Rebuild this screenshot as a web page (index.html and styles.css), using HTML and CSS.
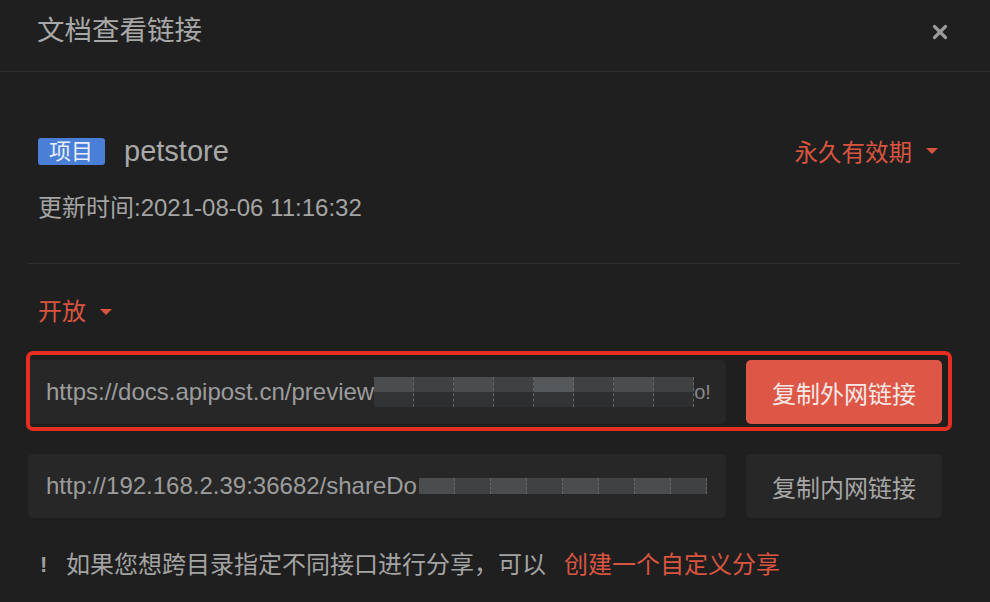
FILE: index.html
```html
<!DOCTYPE html>
<html lang="zh">
<head>
<meta charset="utf-8">
<link rel="stylesheet" href="styles.css">
</head>
<body>
<div class="dialog">
  <div class="header">
    <div class="title">文档查看链接</div>
    <div class="close">
      <svg width="16" height="16" viewBox="0 0 16 16"><path d="M2.5 2.5 L13.5 13.5 M13.5 2.5 L2.5 13.5" stroke="#9a9a9a" stroke-width="3.2" stroke-linecap="round"/></svg>
    </div>
  </div>
  <div class="body">
    <div class="info">
      <div class="project-row">
        <div class="project">
          <span class="tag">项目</span>
          <span class="name">petstore</span>
        </div>
        <div class="expire">永久有效期 <span class="caret"></span></div>
      </div>
      <div class="updated">更新时间:2021-08-06 11:16:32</div>
    </div>
    <div class="divider"></div>
    <div class="mode">开放 <span class="caret"></span></div>
    <div class="links">
      <div class="link-row">
        <div class="input">
          <span class="url">https://docs.apipost.cn/preview</span>
          <span class="blur b1"><i></i><i></i><i></i><i></i><i></i><i></i><i></i><i></i></span>
          <span class="tail">o!</span>
        </div>
        <button class="btn primary">复制外网链接</button>
      </div>
      <div class="link-row">
        <div class="input">
          <span class="url">http://192.168.2.39:36682/shareDo</span>
          <span class="blur b2"><i></i><i></i><i></i><i></i><i></i><i></i><i></i><i></i></span>
        </div>
        <button class="btn">复制内网链接</button>
      </div>
      <div class="highlight"></div>
    </div>
    <div class="note">
      <span class="bang">!</span>
      <span>如果您想跨目录指定不同接口进行分享，可以</span>
      <span class="create">创建一个自定义分享</span>
    </div>
  </div>
</div>
</body>
</html>
```

FILE: styles.css
```css
html, body {
  margin: 0;
  padding: 0;
  background: #1f1f1f;
}
body {
  width: 990px;
  height: 602px;
  overflow: hidden;
  font-family: "Liberation Sans", "Noto Sans CJK SC", sans-serif;
  color: #a9a9a9;
}
.dialog {
  display: flex;
  flex-direction: column;
}
.header {
  height: 72px;
  box-sizing: border-box;
  border-bottom: 1px solid #2f2f2f;
  display: flex;
  align-items: flex-start;
  justify-content: space-between;
  padding: 12px 42px 0 37px;
}
.title {
  font-size: 27.5px;
  line-height: 38px;
  color: #a8a8a8;
}
.close {
  display: flex;
  padding-top: 12px;
}
.body {
  padding: 0 30px 0 28px;
  display: flex;
  flex-direction: column;
}
.info {
  padding: 64px 22px 0 10px;
}
.project-row {
  display: flex;
  justify-content: space-between;
  align-items: center;
  height: 30px;
}
.project {
  display: flex;
  align-items: center;
  gap: 19px;
}
.tag {
  background: #4a7fd8;
  color: #e9eef8;
  font-size: 22px;
  line-height: 27px;
  padding: 0 12px 0 11px;
  border-radius: 3px;
}
.name {
  font-size: 29px;
  color: #a9a9a9;
}
.expire {
  color: #d9553f;
  font-size: 23.5px;
  display: flex;
  align-items: center;
  gap: 14px;
}
.caret {
  display: inline-block;
  width: 0;
  height: 0;
  border-left: 6px solid transparent;
  border-right: 6px solid transparent;
  border-top: 6px solid #d9553f;
}
.updated {
  margin-top: 27px;
  font-size: 24px;
  line-height: 30px;
  color: #a4a4a4;
}
.divider {
  margin-top: 40px;
  height: 1px;
  background: #2f2f2f;
}
.mode {
  margin: 33px 0 0 10px;
  color: #d9553f;
  font-size: 24px;
  line-height: 30px;
  display: flex;
  align-items: center;
  gap: 14px;
}
.links {
  position: relative;
  margin-top: 33px;
  display: flex;
  flex-direction: column;
  gap: 30px;
  padding-right: 18px;
}
.link-row {
  display: flex;
  gap: 20px;
  height: 64px;
}
.input {
  flex: 1;
  background: #272727;
  border-radius: 5px;
  display: flex;
  align-items: center;
  padding-left: 18px;
  overflow: hidden;
  font-size: 24px;
  color: #9c9c9c;
  white-space: nowrap;
}
.blur {
  display: flex;
  height: 30px;
}
.blur i {
  display: block;
  width: 39px;
  height: 100%;
  background: linear-gradient(#4a4c4e 0 50%, #323334 50% 100%);
  border-right: 1px dashed #666;
}
.blur i:nth-child(2n) {
  background: linear-gradient(#3f4143 0 50%, #2d2e2f 50% 100%);
}
.blur i:nth-child(5) {
  background: linear-gradient(#55585a 0 50%, #333435 50% 100%);
}
.blur.b2 {
  height: 16px;
  margin-left: 2px;
}
.blur.b2 i {
  width: 35px;
  background: #4a4c4e;
}
.blur.b2 i:nth-child(2n) {
  background: #3f4143;
}
.tail {
  color: #8a8a8a;
  margin-left: 0;
  font-size: 20px;
}
.btn {
  width: 196px;
  border: none;
  border-radius: 5px;
  background: #272727;
  color: #a6a6a6;
  font-family: "Liberation Sans", "Noto Sans CJK SC", sans-serif;
  font-size: 24px;
}
.btn.primary {
  background: #de5746;
  color: #f4e8e6;
}
.highlight {
  position: absolute;
  left: -2px;
  top: -9px;
  width: 918px;
  height: 72px;
  border: 4px solid #e62e22;
  border-radius: 7px;
  pointer-events: none;
}
.note {
  margin: 32px 0 0 12px;
  font-size: 24px;
  line-height: 30px;
  color: #a4a4a4;
  display: flex;
  align-items: center;
}
.bang {
  font-weight: bold;
  color: #9e9e9e;
  width: 26px;
  font-size: 22px;
}
.create {
  color: #d9553f;
  margin-left: 18px;
}
```
